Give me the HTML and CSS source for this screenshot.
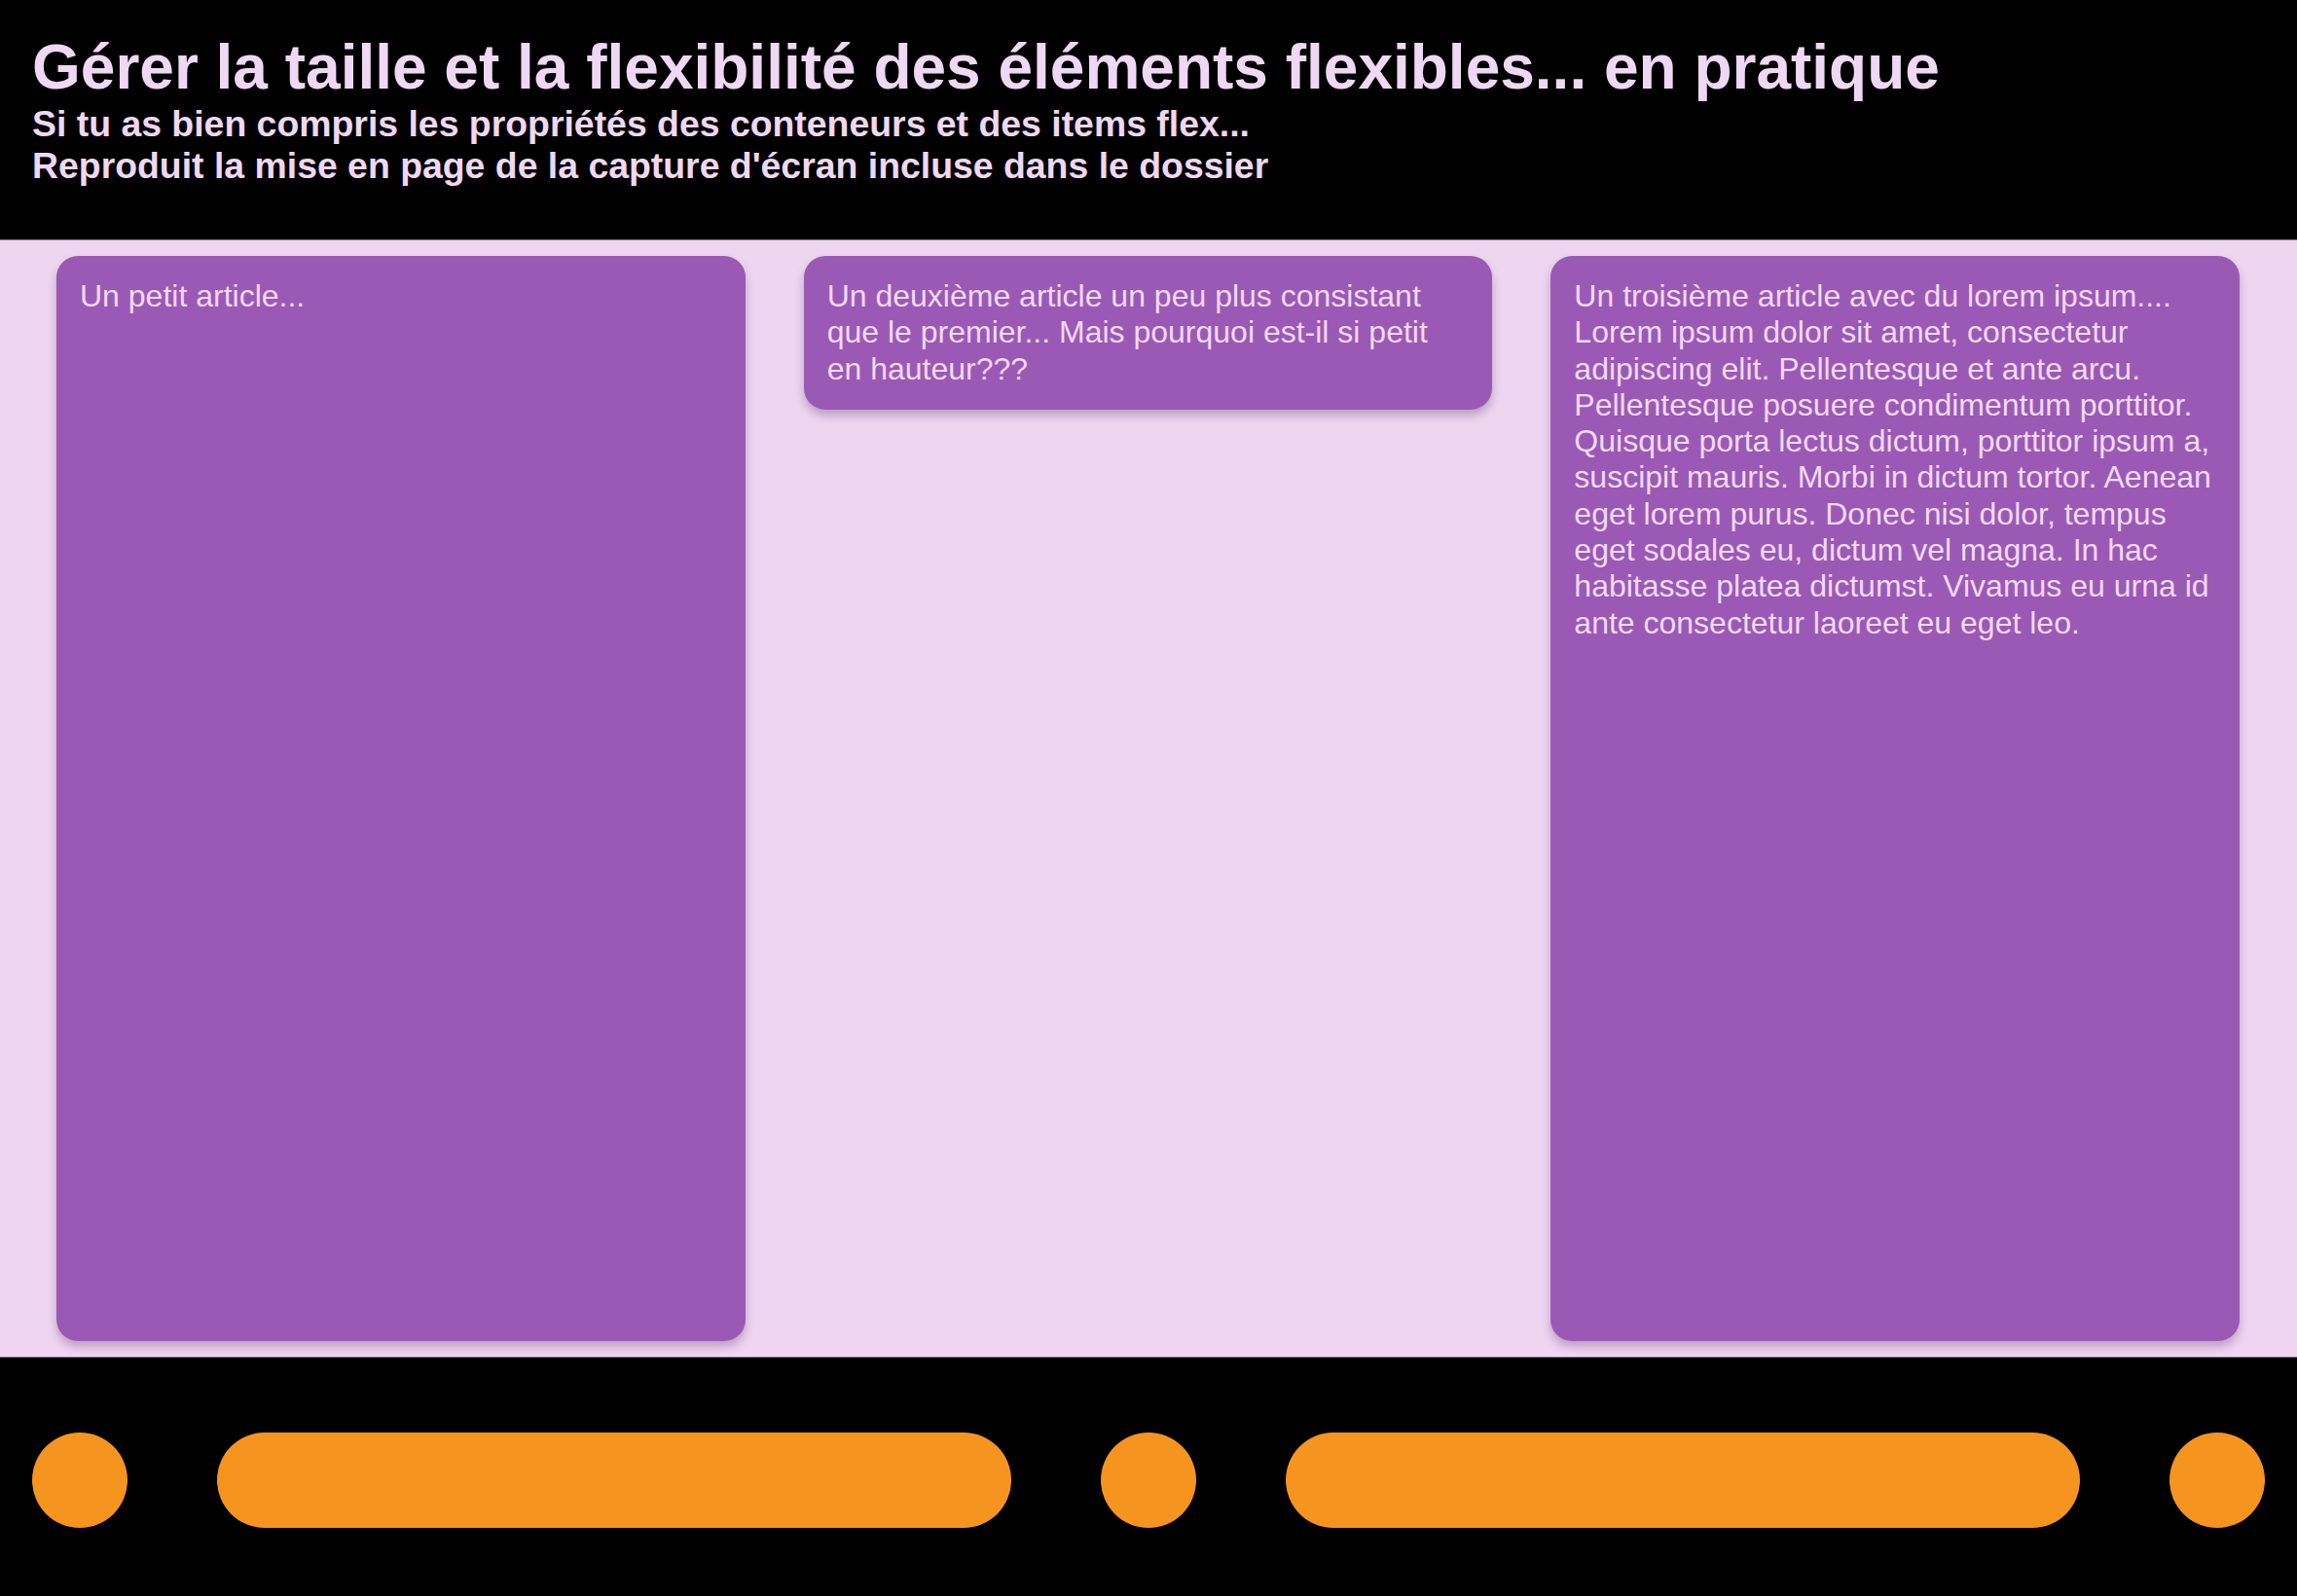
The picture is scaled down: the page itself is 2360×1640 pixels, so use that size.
FILE: index.html
```html
<!DOCTYPE html>
<html lang="fr">
<head>
<meta charset="utf-8">
<title>Flexbox en pratique</title>
<link rel="stylesheet" href="styles.css">
</head>
<body>
<header class="page-header">
  <h1 class="title">Gérer la taille et la flexibilité des éléments flexibles... en pratique</h1>
  <p class="subtitle">Si tu as bien compris les propriétés des conteneurs et des items flex...<br>Reproduit la mise en page de la capture d'écran incluse dans le dossier</p>
</header>
<main class="articles">
  <article class="card card-stretch">Un petit article...</article>
  <article class="card card-start">Un deuxième article un peu plus consistant que le premier... Mais pourquoi est-il si petit en hauteur???</article>
  <article class="card card-stretch">Un troisième article avec du lorem ipsum.... Lorem ipsum dolor sit amet, consectetur adipiscing elit. Pellentesque et ante arcu. Pellentesque posuere condimentum porttitor. Quisque porta lectus dictum, porttitor ipsum a, suscipit mauris. Morbi in dictum tortor. Aenean eget lorem purus. Donec nisi dolor, tempus eget sodales eu, dictum vel magna. In hac habitasse platea dictumst. Vivamus eu urna id ante consectetur laoreet eu eget leo.</article>
</main>
<footer class="page-footer">
  <span class="dot"></span>
  <span class="pill"></span>
  <span class="dot"></span>
  <span class="pill"></span>
  <span class="dot"></span>
</footer>
</body>
</html>
```

FILE: styles.css
```css
* { box-sizing: border-box; }

html, body {
  margin: 0;
  padding: 0;
  height: 100%;
}

body {
  display: flex;
  flex-direction: column;
  height: 100vh;
  background: #000;
  font-family: "Liberation Sans", Arial, sans-serif;
  color: #f0d9f3;
}

.page-header {
  flex: 0 0 246px;
  background: #000;
  padding: 33px 33px 0;
}

.title {
  margin: 0;
  font-size: 64px;
  line-height: 73.6px;
  font-weight: bold;
  color: #efd8f3;
}

.subtitle {
  margin: -1px 0 0;
  font-size: 37.4px;
  line-height: 43.2px;
  font-weight: bold;
  color: #efd8f3;
}

.articles {
  flex: 1 1 auto;
  display: flex;
  align-items: stretch;
  gap: 60px;
  padding: 16px 59px 16px 58px;
  background: #eed6f1;
  border-top: 1px solid #8d7b91;
  border-bottom: 1px solid #8d7b91;
}

.card {
  flex: 1 1 0;
  background: #9b59b6;
  color: #f1daf4;
  border-radius: 22px;
  padding: 23px 24px;
  font-size: 32px;
  line-height: 37.3px;
  box-shadow: 0 6px 10px rgba(70, 20, 80, 0.28);
}

.card-start {
  align-self: flex-start;
}

.page-footer {
  flex: 0 0 245px;
  display: flex;
  align-items: center;
  justify-content: space-between;
  padding: 7px 33px 0;
  background: #000;
}

.dot {
  width: 98px;
  height: 98px;
  border-radius: 50%;
  background: #f69420;
  flex: 0 0 98px;
}

.pill {
  width: 816px;
  height: 98px;
  border-radius: 49px;
  background: #f69420;
  flex: 0 0 816px;
}
```
